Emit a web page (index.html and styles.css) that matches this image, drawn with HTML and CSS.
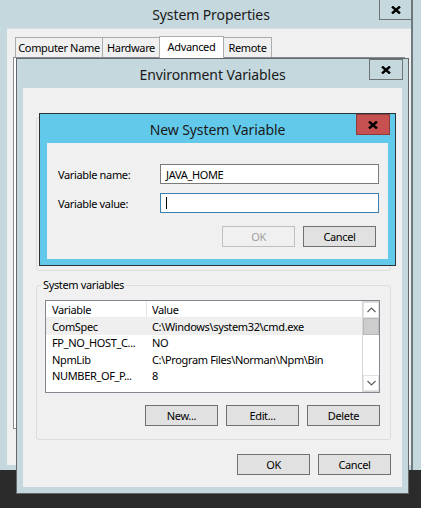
FILE: index.html
```html
<!DOCTYPE html>
<html>
<head>
<meta charset="utf-8">
<title>New System Variable</title>
<link rel="stylesheet" href="styles.css">
</head>
<body>
<div class="desk">
  <div class="backwin"></div>

  <div class="win sys">
    <div class="titlebar">System Properties</div>
    <div class="close">
      <svg width="10" height="8" viewBox="0 0 10 8"><path d="M1 0.5 L9 7.5 M9 0.5 L1 7.5" stroke="#000" stroke-width="2.4" fill="none"/></svg>
    </div>
    <div class="client sys-client">
      <div class="tabs">
        <div class="tab w-cn">Computer Name</div>
        <div class="tab w-hw">Hardware</div>
        <div class="tab sel w-adv">Advanced</div>
        <div class="tab w-rem">Remote</div>
      </div>
      <div class="tabpanel"></div>
    </div>
  </div>

  <div class="win env">
    <div class="titlebar">Environment Variables</div>
    <div class="close">
      <svg width="10" height="8" viewBox="0 0 10 8"><path d="M1 0.5 L9 7.5 M9 0.5 L1 7.5" stroke="#000" stroke-width="2.4" fill="none"/></svg>
    </div>
    <div class="client env-client">
      <fieldset class="group user-group">
        <legend>User variables for Administrator</legend>
      </fieldset>
      <fieldset class="group sys-group">
        <legend>System variables</legend>
        <div class="list">
          <div class="list-main">
            <div class="lrow head">
              <div class="c1">Variable</div>
              <div class="c2">Value</div>
            </div>
            <div class="lrow hl"><div class="c1">ComSpec</div><div class="c2">C:\Windows\system32\cmd.exe</div></div>
            <div class="lrow"><div class="c1">FP_NO_HOST_C...</div><div class="c2">NO</div></div>
            <div class="lrow"><div class="c1">NpmLib</div><div class="c2">C:\Program Files\Norman\Npm\Bin</div></div>
            <div class="lrow"><div class="c1">NUMBER_OF_P...</div><div class="c2">8</div></div>
          </div>
          <div class="vscroll">
            <div class="arrow">
              <svg width="9" height="6" viewBox="0 0 9 6"><path d="M0.5 5 L4.5 1 L8.5 5" stroke="#606060" stroke-width="1.2" fill="none"/></svg>
            </div>
            <div class="thumb"></div>
            <div class="track"></div>
            <div class="arrow">
              <svg width="9" height="6" viewBox="0 0 9 6"><path d="M0.5 1 L4.5 5 L8.5 1" stroke="#606060" stroke-width="1.2" fill="none"/></svg>
            </div>
          </div>
        </div>
        <div class="btnrow group-btns">
          <div class="btn">New...</div>
          <div class="btn">Edit...</div>
          <div class="btn">Delete</div>
        </div>
      </fieldset>
      <div class="btnrow env-btns">
        <div class="btn">OK</div>
        <div class="btn">Cancel</div>
      </div>
    </div>
  </div>

  <div class="win newvar">
    <div class="titlebar">New System Variable</div>
    <div class="close red">
      <svg width="10" height="8" viewBox="0 0 10 8"><path d="M1 0.5 L9 7.5 M9 0.5 L1 7.5" stroke="#000" stroke-width="2.4" fill="none"/></svg>
    </div>
    <div class="client nv-client">
      <div class="form">
        <div class="lbl">Variable name:</div>
        <div class="field">JAVA_HOME</div>
        <div class="lbl">Variable value:</div>
        <div class="field focus"><span class="caret"></span></div>
      </div>
      <div class="btnrow nv-btns">
        <div class="btn disabled">OK</div>
        <div class="btn">Cancel</div>
      </div>
    </div>
  </div>
</div>
</body>
</html>
```

FILE: styles.css
```css
* { box-sizing: border-box; }
html, body {
  margin: 0;
  padding: 0;
}
body {
  background: #2b2b2b;
  font-family: "Noto Sans", "Open Sans", sans-serif;
  font-size: 11px;
  letter-spacing: -0.35px;
  color: #000;
  width: 421px;
  height: 508px;
  overflow: hidden;
}
.desk {
  position: relative;
  width: 421px;
  height: 508px;
}
.backwin {
  position: absolute;
  left: 0;
  top: 0;
  width: 421px;
  height: 470px;
  background: #c4d8de;
}

/* generic window */
.win {
  position: absolute;
  background: #c4d8de;
  display: flex;
  flex-direction: column;
}
.titlebar {
  display: flex;
  align-items: center;
  justify-content: center;
  font-size: 14px;
  letter-spacing: -0.1px;
  color: #1a1a1a;
  flex: none;
  white-space: nowrap;
}
.client {
  background: #f0f0f0;
  flex: 1;
}
.close {
  position: absolute;
  top: 1px;
  width: 34px;
  height: 21px;
  border: 1px solid #6e7476;
  display: flex;
  align-items: center;
  justify-content: center;
}
.close.red {
  background: #c75050;
  border-color: #8e3a3a;
}

/* System Properties */
.sys {
  left: 0;
  top: 0;
  width: 413px;
  height: 470px;
  border-right: 2px solid #6f7a7e;
  padding: 0 0 5px 7px;
}
.sys .titlebar { height: 28px; padding-left: 4px; }
.sys .close { top: -1px; right: -2px; }
.sys-client {
  border-top: 1px solid #d5dde0;
  display: flex;
  flex-direction: column;
  padding: 7px 0 0 6px;
}
.tabs {
  display: flex;
  align-items: flex-end;
  margin-left: 2px;
  height: 22px;
  position: relative;
  z-index: 1;
  margin-bottom: -1px;
}
.tab {
  height: 20px;
  border: 1px solid #adadad;
  border-bottom: none;
  background: #f0f0f0;
  display: flex;
  align-items: center;
  justify-content: center;
  margin-right: -1px;
  margin-bottom: 1px;
  white-space: nowrap;
}
.tab.sel {
  height: 22px;
  background: #fff;
  margin-bottom: 0;
  padding-bottom: 3px;
}
.w-cn { width: 88px; }
.w-hw { width: 58px; }
.w-adv { width: 65px; }
.w-rem { width: 49px; }
.tabpanel {
  width: 392px;
  height: 372px;
  border: 1px solid #898c95;
  background: #fff;
}

/* Environment Variables */
.env {
  left: 16px;
  top: 58px;
  width: 393px;
  height: 436px;
  border: 1px solid #62686b;
  padding: 0 6px 6px 6px;
}
.env .titlebar { height: 29px; padding-top: 1px; }
.env .close { right: 5px; top: 0; }
.env-client {
  display: flex;
  flex-direction: column;
  padding: 21px 11px 0 13px;
}
.group {
  margin: 0;
  border: 1px solid #dcdcdc;
  border-radius: 3px;
  padding: 0 10px 0 8px;
  min-width: 0;
}
.group legend {
  padding: 0 2px;
  margin-left: -4px;
  line-height: 16px;
  height: 16px;
  white-space: nowrap;
}
.user-group { height: 162px; }
.sys-group {
  margin-top: 6px;
  height: 163px;
  padding-top: 7px;
}

.list {
  height: 93px;
  border: 1px solid #828790;
  background: #fff;
  display: flex;
}
.list-main {
  flex: 1;
  overflow: hidden;
}
.lrow {
  display: flex;
  height: 16.5px;
  align-items: center;
  white-space: nowrap;
}
.lrow .c1 { width: 101px; padding-left: 6px; }
.lrow .c2 { padding-left: 5px; }
.lrow.head {
  height: 17px;
  border-bottom: 1px solid #ececec;
}
.lrow.head .c1 { border-right: 1px solid #e5e5e5; height: 100%; display: flex; align-items: center; }
.lrow.hl { background: #efefef; }
.vscroll {
  width: 17px;
  flex: none;
  display: flex;
  flex-direction: column;
  border: 1px solid #d6d6d6;
  border-right: none;
  background: #fff;
}
.arrow {
  height: 16px;
  flex: none;
  display: flex;
  align-items: center;
  justify-content: center;
  border: 1px solid #e2e2e2;
}
.thumb {
  height: 17px;
  flex: none;
  background: #cdcdcd;
  border: 1px solid #b8b8b8;
}
.track { flex: 1; background: #fff; }

.btnrow {
  display: flex;
  justify-content: flex-end;
  gap: 8px;
}
.btn {
  width: 73px;
  height: 21px;
  border: 1px solid #707070;
  background: #e1e1e1;
  display: flex;
  align-items: center;
  justify-content: center;
}
.btn.disabled {
  border-color: #bfbfbf;
  background: #f0f0f0;
  color: #a0a0a0;
}
.group-btns { margin-top: 12px; }
.env-btns { margin-top: 14px; }

/* New System Variable */
.newvar {
  left: 39px;
  top: 113px;
  width: 357px;
  height: 153px;
  border: 1px solid #2d3236;
  background: #62c9ea;
  padding: 0 7px 6px 7px;
}
.newvar .titlebar { height: 29px; padding-top: 1px; }
.newvar .close { right: 5px; top: 0; }
.nv-client {
  padding: 21px 12px 0 11px;
  display: flex;
  flex-direction: column;
}
.form {
  display: grid;
  grid-template-columns: 102px 219px;
  row-gap: 9px;
  align-items: center;
}
.field {
  height: 20px;
  border: 1px solid #7a7a7a;
  background: #fff;
  padding-left: 5px;
  display: flex;
  align-items: center;
}
.field.focus { border-color: #3c7fb1; }
.caret {
  width: 1px;
  height: 12px;
  background: #000;
}
.nv-btns { margin-top: 13px; }
```
